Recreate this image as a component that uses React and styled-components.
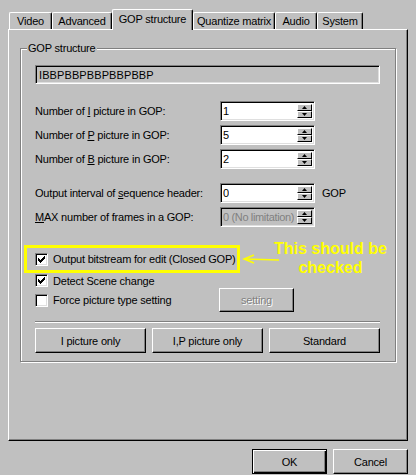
import React from 'react';
import styled, { createGlobalStyle } from 'styled-components';

const GlobalStyle = createGlobalStyle`
  html, body {
    margin: 0;
    padding: 0;
    background: #c0c0c0;
  }
  body {
    font-family: "Liberation Sans", Arial, sans-serif;
    font-size: 11px;
    letter-spacing: -0.2px;
    color: #000;
  }
`;

const Window = styled.div`
  width: 416px;
  height: 475px;
  box-sizing: border-box;
  padding: 9px 8px 0;
  background: #c0c0c0;
  overflow: hidden;
`;

const TabStrip = styled.div`
  display: flex;
  align-items: flex-end;
  height: 20px;
  padding-left: 1px;
`;

const Tab = styled.div`
  position: relative;
  z-index: ${({ active }) => (active ? 1 : 0)};
  width: ${({ w }) => w}px;
  height: ${({ active }) => (active ? 21 : 17)}px;
  margin-bottom: ${({ active }) => (active ? -1 : 0)}px;
  padding-bottom: ${({ active }) => (active ? 3 : 0)}px;
  box-sizing: border-box;
  display: flex;
  align-items: center;
  justify-content: center;
  background: #c0c0c0;
  border-top: 1px solid #fff;
  border-left: 1px solid #fff;
  border-right: 1px solid #000;
  border-radius: 2px 2px 0 0;
  box-shadow: inset -1px 0 #808080;
  white-space: nowrap;
`;

const Panel = styled.div`
  width: 400px;
  height: 412px;
  box-sizing: border-box;
  border: 1px solid;
  border-color: #fff #000 #000 #fff;
  box-shadow: inset -1px -1px #808080;
  padding: 18px 0 0 11px;
`;

const Group = styled.div`
  position: relative;
  width: 376px;
  height: 314px;
  box-sizing: border-box;
  border: 1px solid #808080;
  box-shadow: inset 1px 1px #fff, 1px 1px #fff;
  padding: 16px 15px 0 14px;
  display: flex;
  flex-direction: column;
`;

const Legend = styled.span`
  position: absolute;
  top: -7px;
  left: 6px;
  padding: 0 1px;
  line-height: 13px;
  background: #c0c0c0;
`;

const sunken = `
  box-sizing: border-box;
  border: 1px solid;
  border-color: #808080 #fff #fff #808080;
  box-shadow: inset 1px 1px #000, inset -1px -1px #dfdfdf;
`;

const ReadField = styled.div`
  ${sunken}
  height: 19px;
  padding-left: 3px;
  display: flex;
  align-items: center;
  background: #c0c0c0;
  letter-spacing: 0.1px;
`;

const SpinRow = styled.div`
  display: flex;
  align-items: center;
  height: 20px;
  margin-top: ${({ mt }) => mt}px;
`;

const Label = styled.div`
  width: ${({ w }) => w || 185}px;
  flex-shrink: 0;
  white-space: nowrap;
`;

const SpinBox = styled.div`
  ${sunken}
  width: 95px;
  height: 20px;
  display: flex;
  align-items: stretch;
  justify-content: space-between;
  padding: 2px 2px 2px 2px;
  background: ${({ disabled }) => (disabled ? '#c0c0c0' : '#fff')};
  color: ${({ disabled }) => (disabled ? '#808080' : '#000')};
  letter-spacing: ${({ disabled }) => (disabled ? '-0.35px' : 'inherit')};
`;

const SpinValue = styled.span`
  display: flex;
  align-items: center;
  white-space: nowrap;
  overflow: hidden;
`;

const SpinButtons = styled.div`
  width: 15px;
  display: flex;
  flex-direction: column;
  flex-shrink: 0;
`;

const SpinButton = styled.div`
  flex: 1;
  box-sizing: border-box;
  display: flex;
  align-items: center;
  justify-content: center;
  background: #c0c0c0;
  border: 1px solid;
  border-color: #fff #000 #000 #fff;
`;

const Unit = styled.span`
  margin-left: 7px;
`;

const CheckRow = styled.div`
  display: flex;
  align-items: ${({ top }) => (top ? 'flex-start' : 'center')};
  height: ${({ h }) => h}px;
  margin-top: ${({ mt }) => mt || 0}px;
`;

const Highlight = styled.div`
  width: 216px;
  height: 28px;
  margin-left: -11px;
  box-sizing: border-box;
  border: 3px solid #ffff00;
  padding-left: 8px;
  display: flex;
  align-items: center;
  flex-shrink: 0;
`;

const CheckItem = styled.div`
  display: flex;
  align-items: center;
  gap: 5px;
  white-space: nowrap;
  width: ${({ w }) => (w ? `${w}px` : 'auto')};
  flex-shrink: 0;
`;

const Box = styled.span`
  ${sunken}
  width: 13px;
  height: 13px;
  background: #fff;
  display: flex;
  align-items: center;
  justify-content: center;
  flex-shrink: 0;
`;

const Arrow = styled.svg`
  align-self: center;
  margin-left: 2px;
  flex-shrink: 0;
`;

const Callout = styled.div`
  margin: -6px 0 0 -6px;
  color: #ffff00;
  font-weight: bold;
  font-size: 16px;
  line-height: 19px;
  letter-spacing: 0;
  text-align: center;
  white-space: nowrap;
`;

const Button = styled.button`
  font: inherit;
  letter-spacing: inherit;
  height: ${({ h }) => h || 25}px;
  width: ${({ w }) => (w ? `${w}px` : 'auto')};
  padding: 0;
  margin: 0;
  box-sizing: border-box;
  background: #c0c0c0;
  color: ${({ disabled }) => (disabled ? '#808080' : '#000')};
  text-shadow: ${({ disabled }) => (disabled ? '1px 1px #fff' : 'none')};
  border: 1px solid;
  border-color: ${({ primary }) => (primary ? '#000' : '#fff #000 #000 #fff')};
  box-shadow: ${({ primary }) => (primary
    ? 'inset 1px 1px #fff, inset -1px -1px #000, inset -2px -2px #808080'
    : 'inset -1px -1px #808080')};
  cursor: default;
`;

const Separator = styled.div`
  margin-top: 9px;
  border-top: 1px solid #808080;
  border-bottom: 1px solid #fff;
`;

const ButtonRow = styled.div`
  display: grid;
  grid-template-columns: repeat(3, 111px);
  gap: 6px;
  margin-top: 5px;
`;

const Footer = styled.div`
  display: flex;
  justify-content: flex-end;
  gap: 6px;
  width: 400px;
  margin-top: 8px;
`;

const tabs = [
  { label: 'Video', w: 43 },
  { label: 'Advanced', w: 60 },
  { label: 'GOP structure', w: 81, active: true },
  { label: 'Quantize matrix', w: 82 },
  { label: 'Audio', w: 42 },
  { label: 'System', w: 46 },
];

function Check() {
  return (
    <svg width="7" height="7" viewBox="0 0 7 7" shapeRendering="crispEdges">
      <polygon points="0,2 2,4 7,-1 7,2 2,7 0,5" fill="#000" />
    </svg>
  );
}

function CheckBox({ checked }) {
  return <Box>{checked && <Check />}</Box>;
}

function Spin({ value, disabled }) {
  return (
    <SpinBox disabled={disabled}>
      <SpinValue>{value}</SpinValue>
      <SpinButtons>
        <SpinButton>
          <svg width="5" height="3" viewBox="0 0 5 3"><polygon points="0,3 2.5,0 5,3" fill="#000" /></svg>
        </SpinButton>
        <SpinButton>
          <svg width="5" height="3" viewBox="0 0 5 3"><polygon points="0,0 5,0 2.5,3" fill="#000" /></svg>
        </SpinButton>
      </SpinButtons>
    </SpinBox>
  );
}

export default function App() {
  return (
    <Window>
      <GlobalStyle />
      <TabStrip>
        {tabs.map((t) => (
          <Tab key={t.label} w={t.w} active={t.active}>{t.label}</Tab>
        ))}
      </TabStrip>
      <Panel>
        <Group>
          <Legend>GOP structure</Legend>
          <ReadField>IBBPBBPBBPBBPBBP</ReadField>

          <SpinRow mt={17}>
            <Label>Number of <u>I</u> picture in GOP:</Label>
            <Spin value="1" />
          </SpinRow>
          <SpinRow mt={4}>
            <Label>Number of <u>P</u> picture in GOP:</Label>
            <Spin value="5" />
          </SpinRow>
          <SpinRow mt={4}>
            <Label>Number of <u>B</u> picture in GOP:</Label>
            <Spin value="2" />
          </SpinRow>
          <SpinRow mt={14}>
            <Label>Output interval of <u>s</u>equence header:</Label>
            <Spin value="0" />
            <Unit>GOP</Unit>
          </SpinRow>
          <SpinRow mt={4}>
            <Label><u>M</u>AX number of frames in a GOP:</Label>
            <Spin value="0 (No limitation)" disabled />
          </SpinRow>

          <CheckRow h={28} mt={18} top>
            <Highlight>
              <CheckItem>
                <CheckBox checked />
                <span>Output bitstream for edit (Closed GOP)</span>
              </CheckItem>
            </Highlight>
            <Arrow width="38" height="12" viewBox="0 0 38 12">
              <polyline points="12,2 2,6 12,10" fill="none" stroke="#ffff00" strokeWidth="1.6" />
              <polyline points="2,6 20,6.5 37,7" fill="none" stroke="#ffff00" strokeWidth="1.6" />
            </Arrow>
            <Callout>
              This should be
              <br />
              checked
            </Callout>
          </CheckRow>
          <CheckRow h={15}>
            <CheckItem>
              <CheckBox checked />
              <span>Detect Scene change</span>
            </CheckItem>
          </CheckRow>
          <CheckRow h={24}>
            <CheckItem w={184}>
              <CheckBox />
              <span>Force picture type setting</span>
            </CheckItem>
            <Button w={75} h={24} disabled>setting</Button>
          </CheckRow>

          <Separator />
          <ButtonRow>
            <Button>I picture only</Button>
            <Button>I,P picture only</Button>
            <Button>Standard</Button>
          </ButtonRow>
        </Group>
      </Panel>
      <Footer>
        <Button w={75} primary>OK</Button>
        <Button w={75}>Cancel</Button>
      </Footer>
    </Window>
  );
}
